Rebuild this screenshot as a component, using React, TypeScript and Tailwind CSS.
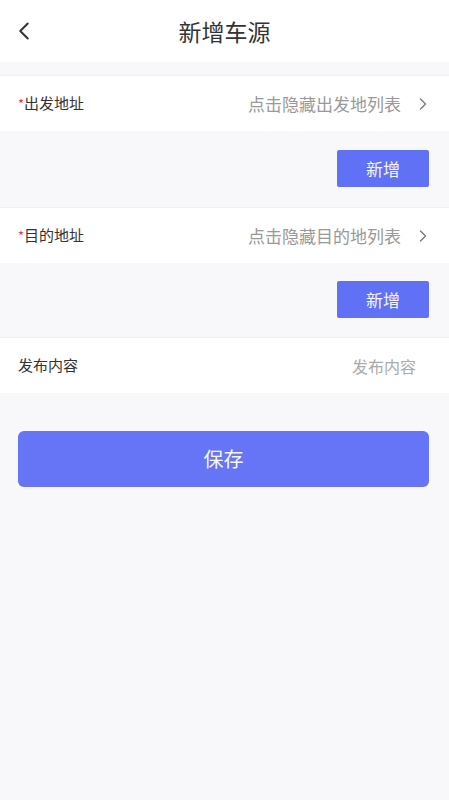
import { ChevronLeft, ChevronRight } from "lucide-react";

const FONT = { fontFamily: '"Noto Sans CJK SC", "Noto Sans", sans-serif' };

function SelectRow({ label, hint }: { label: string; hint: string }) {
  return (
    <div className="h-[56px] bg-white flex items-center pl-[18px] pr-[16px] border-t border-[#f0f0f3]">
      <span className="text-[15px] text-[#333]">
        <span className="text-[#e5383b] text-[13px]">*</span>
        {label}
      </span>
      <span className="ml-auto text-[17px] text-[#999]">{hint}</span>
      <ChevronRight className="w-[20px] h-[20px] ml-[12px] text-[#777]" strokeWidth={1.6} />
    </div>
  );
}

function AddBar({ top }: { top: string }) {
  return (
    <div className={`flex justify-end pr-[20px] ${top}`}>
      <button className="w-[92px] h-[37px] bg-[#6171f5] text-[#f4f5ff] text-[17px] rounded-[2px]">新增</button>
    </div>
  );
}

export default function App() {
  return (
    <div className="min-h-[800px] bg-[#f8f8fa]" style={FONT}>
      {/* Header */}
      <div className="h-[62px] bg-white relative flex items-center justify-center">
        <ChevronLeft className="absolute left-[9px] top-[16px] w-[30px] h-[30px] text-[#333]" strokeWidth={1.6} />
        <h1 className="text-[23px] text-[#333]">新增车源</h1>
      </div>

      <div className="h-[13px]" />
      <SelectRow label="出发地址" hint="点击隐藏出发地列表" />
      <AddBar top="pt-[19px] pb-[20px]" />

      <SelectRow label="目的地址" hint="点击隐藏目的地列表" />
      <AddBar top="pt-[18px] pb-[19px]" />

      <div className="h-[56px] bg-white flex items-center pl-[18px] pr-[33px] border-t border-[#f0f0f3]">
        <span className="text-[15px] text-[#333]">发布内容</span>
        <span className="ml-auto text-[16px] text-[#aaa]">发布内容</span>
      </div>

      <div className="pl-[18px] pr-[20px] pt-[38px]">
        <button className="w-full h-[56px] rounded-[6px] bg-[#6575f6] text-[#f4f5ff] text-[20px]">保存</button>
      </div>
    </div>
  );
}
